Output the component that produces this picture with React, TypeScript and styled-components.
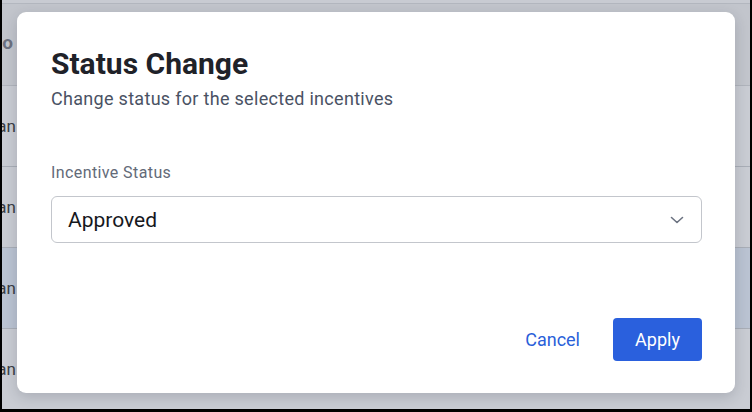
import styled, { createGlobalStyle } from 'styled-components';

const GlobalStyle = createGlobalStyle`
  html, body {
    margin: 0;
    padding: 0;
    background: #000;
  }
  body {
    font-family: Roboto, "Liberation Sans", Arial, sans-serif;
    -webkit-font-smoothing: antialiased;
  }
`

const rows = [
  { name: 'Dan', selected: false },
  { name: 'Dan', selected: false },
  { name: 'Dan', selected: true },
  { name: 'Dan', selected: false },
];

const App = () => {
  return (
    <>
      <GlobalStyle />
      <Screen>
        <Backdrop>
          <HeaderRow>
            <Cell $header>No</Cell>
          </HeaderRow>
          {rows.map((row, i) => (
            <Row key={i} $selected={row.selected}>
              <Cell>{row.name}</Cell>
            </Row>
          ))}
        </Backdrop>

        <Modal role="dialog" aria-labelledby="status-title">
          <Title id="status-title">Status Change</Title>
          <Subtitle>Change status for the selected incentives</Subtitle>

          <Field>
            <Label htmlFor="incentive-status">Incentive Status</Label>
            <SelectBox id="incentive-status">
              <span>Approved</span>
              <svg width="16" height="16" viewBox="0 0 16 16" fill="none">
                <path d="M2.5 5.5 8 10.5l5.5-5" stroke="#6b7280" strokeWidth="1.6" strokeLinecap="round" strokeLinejoin="round" />
              </svg>
            </SelectBox>
          </Field>

          <Footer>
            <TextButton>Cancel</TextButton>
            <PrimaryButton>Apply</PrimaryButton>
          </Footer>
        </Modal>
      </Screen>
    </>
  )
}

const Screen = styled.div`
  position: relative;
  width: 748px;
  height: 409px;
  margin-left: 2px;
  overflow: hidden;
  background: #c8cbd2;
`

const Backdrop = styled.div`
  display: flex;
  flex-direction: column;
  height: 100%;
  border-top: 1px solid #b3b7bf;
  margin-top: 3px;
`

const HeaderRow = styled.div`
  display: flex;
  align-items: center;
  height: 81px;
  background: #c2c5cc;
  border-bottom: 1px solid #b0b4bc;
`

const Row = styled.div<{ $selected?: boolean }>`
  display: flex;
  align-items: center;
  height: 80px;
  background: ${(p) => (p.$selected ? '#bac3d2' : '#c9ccd3')};
  border-bottom: 1px solid #a9aeb7;
`

const Cell = styled.div<{ $header?: boolean }>`
  width: ${(p) => (p.$header ? '11px' : '14px')};
  display: flex;
  justify-content: flex-end;
  overflow: hidden;
  white-space: nowrap;
  font-size: ${(p) => (p.$header ? '19px' : '17px')};
  font-weight: ${(p) => (p.$header ? 700 : 400)};
  color: ${(p) => (p.$header ? '#6c7180' : '#3b3e45')};
  margin-top: ${(p) => (p.$header ? '-4px' : '0')};
`

const Modal = styled.div`
  position: absolute;
  left: 15px;
  top: 12px;
  width: 718px;
  height: 381px;
  box-sizing: border-box;
  padding: 33px 33px 32px 34px;
  background: #fff;
  border-radius: 9px;
  box-shadow: 0 4px 14px rgba(30, 35, 50, 0.18);
  display: flex;
  flex-direction: column;
`

const Title = styled.h2`
  margin: 0;
  font-size: 30px;
  line-height: 38px;
  font-weight: 700;
  color: #1f2229;
`

const Subtitle = styled.p`
  margin: 4px 0 0;
  font-size: 18px;
  line-height: 24px;
  letter-spacing: 0.3px;
  color: #4a5264;
`

const Field = styled.div`
  display: flex;
  flex-direction: column;
  margin-top: 52px;
  gap: 13px;
`

const Label = styled.label`
  font-size: 16px;
  line-height: 20px;
  letter-spacing: 0.4px;
  color: #636a78;
`

const SelectBox = styled.div`
  display: flex;
  align-items: center;
  justify-content: space-between;
  height: 47px;
  box-sizing: border-box;
  padding: 0 16px 0 16px;
  border: 1px solid #c3c6cc;
  border-radius: 6px;
  font-size: 21px;
  color: #16181d;
`

const Footer = styled.div`
  margin-top: auto;
  display: flex;
  justify-content: flex-end;
  align-items: center;
  gap: 33px;
`

const TextButton = styled.button`
  border: none;
  background: none;
  padding: 0;
  font-family: inherit;
  font-size: 18px;
  color: #2a5fd9;
  cursor: pointer;
`

const PrimaryButton = styled.button`
  width: 89px;
  height: 43px;
  border: none;
  border-radius: 4px;
  background: #2a60dd;
  color: #fff;
  font-family: inherit;
  font-size: 18px;
  cursor: pointer;
`

export default App
